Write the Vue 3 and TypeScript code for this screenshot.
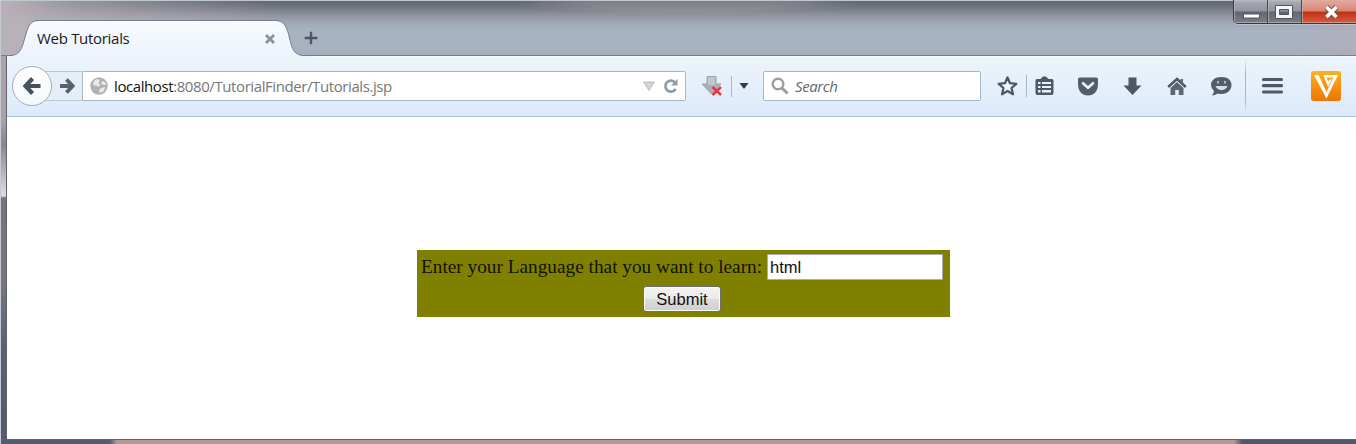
<script setup lang="ts">
import { ref } from 'vue'

const language = ref('html')
const search = ref('')
</script>

<template>
  <div class="window">
    <header class="titlebar">
      <svg class="tab-shape" width="310" height="57" viewBox="0 0 310 57" aria-hidden="true">
        <defs>
          <linearGradient id="tabFill" x1="0" y1="0" x2="0" y2="1">
            <stop offset="0" stop-color="#f9fbfe" />
            <stop offset="1" stop-color="#ebf3fb" />
          </linearGradient>
        </defs>
        <path d="M7 57V55.500H11C18 55 21 51 23 44L26 34C28.500 25 31 21 38 21H276C283 21 286 25 288.500 34L291 44C293 51 296 55 303 55.500H310V57Z" fill="url(#tabFill)" />
        <path d="M7 55.500H11C18 55 21 51 23 44L26 34C28.500 25 31 20.500 38 20.500H276C283 20.500 286 25 288.500 34L291 44C293 51 296 55 303 55.500H310" fill="none" stroke="#75808d" />
      </svg>
      <div class="tab">
        <span class="tab-title">Web Tutorials</span>
        <svg class="tab-close" width="12" height="12" viewBox="0 0 12 12"><path d="M2 2L10 10M10 2L2 10" stroke="#8c9198" stroke-width="2.800" /></svg>
      </div>
      <svg class="new-tab" width="14" height="14" viewBox="0 0 14 14"><path d="M7 .7V13.300M.7 7H13.300" stroke="#4d5661" stroke-width="2.400" /></svg>
      <div class="controls">
        <button class="control" aria-label="Minimize"><svg width="34" height="23" viewBox="0 0 34 23"><rect x="9.500" y="14" width="16" height="4" fill="#fff" stroke="#555861" /></svg></button>
        <button class="control" aria-label="Maximize"><svg width="33" height="23" viewBox="0 0 33 23"><path fill-rule="evenodd" d="M7.500 5.500H24.500V18.500H7.500ZM11.500 9.500V14.500H20.500V9.500Z" fill="#f6f6f7" stroke="#51545d" /></svg></button>
        <button class="control shut" aria-label="Close"><svg width="55" height="23" viewBox="0 0 55 23"><path d="M24.500 7L34.500 17M34.500 7L24.500 17" stroke="#69524f" stroke-width="5.500" /><path d="M24.500 7L34.500 17M34.500 7L24.500 17" stroke="#fff" stroke-width="3.600" /></svg></button>
      </div>
    </header>

    <nav class="toolbar">
      <button class="back" aria-label="Back"><svg width="20" height="20" viewBox="0 0 20 20"><path d="M10.500 2.500L3.500 10L10.500 17.500M4 10H18.500" fill="none" stroke="#47525e" stroke-width="4.200" /></svg></button>
      <div class="forward"><svg width="18" height="18" viewBox="0 0 18 18"><path d="M8.500 2.500L14.500 9L8.500 15.500M14 9H2" fill="none" stroke="#56616c" stroke-width="4" /></svg></div>
      <div class="url">
        <svg width="18" height="18" viewBox="0 0 18 18"><circle cx="9" cy="9" r="8.700" fill="#b1b1b1" /><path d="M7 2L10 3L8.500 6L10.500 8L8 10L6 8L4 9L3 6L5 3ZM12 4L15 5L16 8L13 8L11 6ZM11 11L15 10L14 14L10 16L9 13Z" fill="#e9e9e9" /></svg>
        <span class="address"><b>localhost</b>:8080/TutorialFinder/Tutorials.jsp</span>
        <svg class="history" width="12" height="10" viewBox="0 0 12 10"><path d="M.7 1H11.300L6 9.500Z" fill="#d3d5d8" stroke="#b7bbc0" /></svg>
        <svg class="reload" width="16" height="16" viewBox="0 0 16 16"><path d="M12.700 10.800A5.500 5.500 0 1 1 11.700 4.200" fill="none" stroke="#919ba6" stroke-width="2.700" /><path d="M14.500 1V7.500H8Z" fill="#919ba6" /></svg>
      </div>
      <svg class="download-state" width="22" height="22" viewBox="0 0 22 22"><path d="M6 1.500H15V9H20L10.500 19L1 9H6Z" fill="#a9b0b4" stroke="#9ca4a9" /><path d="M7 2H14V10H7Z" fill="#c3c8cb" /><path d="M11.500 12L20 20M20 12L11.500 20" stroke="#ee3340" stroke-width="2.500" /></svg>
      <i class="divider small" />
      <svg class="dropdown" width="10" height="6" viewBox="0 0 10 6"><path d="M.5 0H9.500L5.800 5Q5 6 4.200 5Z" fill="#303842" /></svg>
      <label class="search">
        <svg width="18" height="18" viewBox="0 0 18 18" fill="none" stroke="#9b9da0"><circle cx="7" cy="7" r="5.300" stroke-width="2.400" /><path d="M11 11L16.500 16.500" stroke-width="3" /></svg>
        <input v-model="search" placeholder="Search" />
      </label>
      <svg class="star" width="24" height="24" viewBox="0 0 24 24"><path d="M12.500 3.500L15 9.200L21.300 9.800L16.500 14L18 20.200L12.500 17L7 20.200L8.500 14L3.700 9.800L10 9.200Z" fill="#f5f9fd" stroke="#4d5864" stroke-width="2.300" stroke-linejoin="round" /></svg>
      <i class="divider bookmark" />
      <svg class="list" width="24" height="24" viewBox="0 0 24 24"><path d="M5 5H8.500L10 3.500L11 2.500H14L15 3.500L16.500 5H20Q21.500 5 21.500 6.500V19Q21.500 21 19.500 21H5.500Q3.500 21 3.500 19V6.500Q3.500 5 5 5Z" fill="#4d5864" /><path d="M6 8H8.500V10H6ZM10 8H19V10H10ZM6 12H8.500V14H6ZM10 12H19V14H10ZM6 16H8.500V18.500H6ZM10 16H19V18.500H10Z" fill="#e8f1f9" /></svg>
      <svg class="tool" width="24" height="24" viewBox="0 0 24 24"><path d="M3.500 3.500H20.500Q22 3.500 22 5V10.500C22 17 18 21.500 12 21.500S2 17 2 10.500V5Q2 3.500 3.500 3.500Z" fill="#535e6a" /><path d="M7 9.200L12 13.700L17 9.200" fill="none" stroke="#f0f5fa" stroke-width="2.500" stroke-linecap="round" /></svg>
      <svg class="tool" width="24" height="24" viewBox="0 0 24 24"><path d="M8.500 3.500H16.500V11.500H21.500L12.500 21L3.500 11.500H8.500Z" fill="#4d5864" /></svg>
      <svg class="home" width="24" height="24" viewBox="0 0 24 24"><path d="M3.200 13L12 5L20.800 13" fill="none" stroke="#4d5864" stroke-width="2.500" /><path d="M15.500 5H18V10H15.500ZM5.500 14L12 8L18.500 14V21H13.800V16H10.200V21H5.500Z" fill="#5b6672" /></svg>
      <svg class="tool" width="24" height="24" viewBox="0 0 24 24"><path d="M12.500 3C19 3 22.500 6.500 22.500 11S19 20 12.500 20Q10.500 20 8.800 19.500Q6 21.500 3 21.500Q4.800 19.500 5 17Q2 14.500 2 11C2 6.500 6 3 12.500 3Z" fill="#515c67" /><path d="M6.500 12H18.500C17 17.500 8 17.500 6.500 12Z" fill="#d5dee6" /><path d="M8 7H10V9.500H8ZM15 7H17V9.500H15Z" fill="#aeb9c2" /></svg>
      <i class="divider tall" />
      <svg class="menu" width="24" height="24" viewBox="0 0 24 24"><path d="M3.500 5.500H21.500M3.500 11.700H21.500M3.500 18H21.500" stroke="#4d5864" stroke-width="3.200" stroke-linecap="round" /></svg>
      <svg class="addon" width="30" height="30" viewBox="0 0 30 30"><defs><linearGradient id="addonFill" x1="0" y1="0" x2="0" y2="1"><stop offset="0" stop-color="#ffb11c" /><stop offset="1" stop-color="#ee7504" /></linearGradient></defs><rect width="30" height="30" rx="3" fill="url(#addonFill)" /><path d="M3 4H7.500L15.500 21L22.500 6.500H15.500L17 10.500L19 8.500H21L17 16L12.300 4H27L15.500 27.500Z" fill="#fff" /></svg>
    </nav>

    <main class="page">
      <form class="finder" @submit.prevent>
        <label class="question"><span>Enter your Language that you want to learn:</span><input v-model="language" /></label>
        <button type="submit">Submit</button>
      </form>
    </main>
    <footer class="frame-bottom" />
  </div>
</template>

<style>
body { margin: 0; overflow: hidden; }
</style>

<style scoped>
* { box-sizing: border-box; }
svg { display: block; flex: none; }
button, input { margin: 0; }
.window {
  width: 1356px; height: 444px; display: grid; grid-template-rows: 56px 61px 322px 5px;
  overflow: hidden; position: relative;
  background: linear-gradient(#b9afb2 0, #aaa4aa 60px, #a9a1a5 120px, #88868c 145px, #dededf 196px, #75737b 198px, #77757f 285px, #596078 350px, #535970 444px);
  border-left: 1px solid #c5cbd3; padding-left: 6px;
}
.window::after { content: ''; position: absolute; left: 5px; top: 56px; bottom: 5px; width: 1px; background: #5f626b; }
.titlebar {
  position: relative; display: flex; margin-left: -6px; border-top: 1px solid #bdc8d2; border-bottom: 1px solid #75808d;
  background:
    radial-gradient(ellipse at 20px 24px, #d6b99a88, transparent 22px),
    radial-gradient(ellipse 175px 16px at 685px 0, #a09a9c77 0 60%, transparent),
    linear-gradient(90deg, #b9b1b7 0, #b9b1b799 75px, transparent 280px, transparent 1285px, #b6adb488 1356px),
    linear-gradient(#5f6470 0, #717580 6px, #8f939e 14px, #a0a8b6 22px, #a8b3c2 30px, #a8b3c2 42px, #a6adba 55px);
}
.tab-shape { position: absolute; left: -1px; top: -1px; }
.tab { position: relative; width: 278px; display: flex; align-items: center; padding: 19px 0 0 36px; }
.tab-title { font: 15px "Open Sans", sans-serif; letter-spacing: -.3px; color: #191b20; width: 227px; white-space: nowrap; }
.tab-close { margin-top: 2px; }
.new-tab { position: relative; margin: 30px 0 0 25px; }
.controls { display: flex; height: 24px; margin: -1px -2px 0 auto; border: 1px solid #343941; border-top: 0; border-radius: 0 0 0 5px; overflow: hidden; box-shadow: 0 1px #dce0e477; }
.control { width: 34px; padding: 0; border: 0; border-right: 1px solid #444751; background: linear-gradient(#b7b7bf 0 1px, #a6a7b0 2px, #92949e 11px, #62656f 12px, #7c7e87 23px); box-shadow: inset 1px -1px #c5c5ca99; overflow: hidden; }
.shut { width: 55px; border: 0; background: linear-gradient(#e2aaa0 0, #d98674 11px, #be3218 12px, #db5a38 23px); }
.toolbar {
  display: flex; align-items: center; padding-left: 5px; background: linear-gradient(#edf4fb, #dceafa); border-bottom: 1px solid #aebfce;
  box-shadow: inset 0 1px #f7fbff;
}
.back { width: 40px; height: 40px; border: 1px solid #a0afbd; border-radius: 50%; background: linear-gradient(#fff, #f4f8fc); display: grid; place-items: center; padding: 0; flex: none; z-index: 1; }
.forward { width: 37px; height: 30px; margin-left: -7px; display: flex; align-items: center; padding-left: 13px; border: solid #bac9d6; border-width: 1px 0; background: #e5eef8; }
.url, .search { height: 30px; display: flex; align-items: center; border: 1px solid #a9b6c3; background: #fff; border-radius: 0 2px 2px 0; }
.url { width: 604px; padding: 0 6px 0 7px; flex: none; }
.address { margin-left: 6px; font: 15px "Open Sans", sans-serif; letter-spacing: -.41px; color: #777; white-space: nowrap; }
.address b { font-weight: 400; color: #111; }
.history { margin-left: auto; }
.reload { margin-left: 8px; }
.download-state { margin-left: 15px; }
.divider { flex: none; width: 1px; background: #a7b8c7; }
.small { height: 21px; margin-left: 8px; }
.dropdown { margin-left: 7px; }
.search { width: 218px; margin-left: 14px; padding-left: 7px; border-radius: 2px; flex: none; }
.search input { width: 170px; border: 0; outline: 0; padding: 0; margin-left: 6px; background: transparent; font: italic 15px "Open Sans", sans-serif; letter-spacing: -.4px; }
.search input::placeholder { color: #666; opacity: 1; }
.star { margin-left: 14px; }
.bookmark { height: 22px; margin-left: 7px; }
.list { margin-left: 5px; }
.tool { margin-left: 20px; }
.home { margin-left: 21px; }
.tall { height: 55px; margin-left: 12px; background: linear-gradient(#a7b8c700, #a7b8c7 25%, #a7b8c7 75%, #a7b8c700); }
.menu { margin-left: 14px; }
.addon { margin-left: 27px; }
.page { background: #fff; padding: 133px 0 0 410px; }
.finder { width: 533px; height: 67px; background: #808000; display: flex; flex-direction: column; align-items: center; padding-top: 4px; }
.question { width: 100%; display: flex; align-items: center; padding-left: 4px; }
.question span { width: 346px; white-space: nowrap; font: 19.300px "Liberation Serif", serif; color: #111100; }
.question input { width: 176px; height: 26px; padding: 1px 2px 0; border: 1px solid #abadb3; border-radius: 1px; background: #fff; font: 16.500px "Liberation Sans", sans-serif; color: #111; }
.finder button { width: 78px; height: 26px; padding: 1px 0 0; margin: 6px 3px 0 0; border: 1px solid #707070; border-radius: 3px; background: linear-gradient(#f3f3f3 0, #ebebeb 49%, #dddddd 50%, #cfcfcf); box-shadow: inset 0 0 0 1px #fafafa; font: 16.500px "Liberation Sans", sans-serif; color: #111; }
.frame-bottom { border-top: 1px solid #626267; background: linear-gradient(90deg, #555b70 0 109px, #b59894 116px 1233px, #515769 1241px); margin-left: -6px; }
</style>
